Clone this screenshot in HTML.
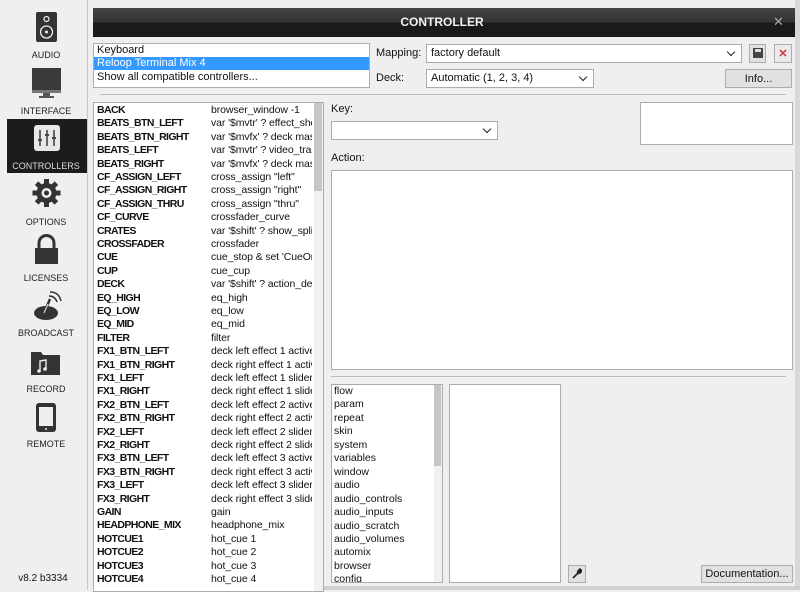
<!DOCTYPE html>
<html><head><style>
*{margin:0;padding:0;box-sizing:border-box}
body{width:800px;height:590px;overflow:hidden;background:#efefef;font-family:"Liberation Sans",sans-serif;font-size:11px;color:#111;position:relative}
.a{position:absolute}
.side{left:0;top:0;width:88px;height:590px;background:#efefef;border-right:1px solid #c8c8c8}
.lbl{position:absolute;width:86px;text-align:center;font-size:9px;color:#222;left:3px}
.box{position:absolute;background:#fff;border:1px solid #acacac}
.sel{position:absolute;background:#fff;border:1px solid #acacac;padding:2px 0 0 4px}
.sel:after{content:"";position:absolute;right:7px;top:4px;width:5px;height:5px;border-right:1.5px solid #222;border-bottom:1.5px solid #222;transform:rotate(45deg)}
.btn{position:absolute;background:#e1e1e1;border:1px solid #adadad;text-align:center;padding-top:3px}
.row{position:absolute;left:3px;height:13px;white-space:nowrap;font-size:10.5px}
.row b{position:absolute;left:0;letter-spacing:-0.6px}
.row span{position:absolute;left:114px;letter-spacing:-0.1px}
</style></head><body>
<div class="a side"></div>
<div class="a" style="left:7px;top:119px;width:80px;height:54px;background:#1c1c1c"></div>
<svg class="a" style="left:0;top:0" width="88" height="440">
<rect x="36" y="12" width="21" height="30" rx="2" fill="#333"/><circle cx="46.5" cy="19" r="2.5" fill="none" stroke="#eee" stroke-width="1.2"/><circle cx="46.5" cy="32" r="6" fill="none" stroke="#eee" stroke-width="1.3"/><circle cx="46.5" cy="32" r="1.5" fill="#eee"/>
<rect x="32" y="68" width="29" height="22" fill="#3a3a3a"/><rect x="32" y="90" width="29" height="3" fill="#777"/><rect x="43" y="93" width="7" height="3" fill="#555"/><rect x="39" y="96" width="15" height="2" fill="#555"/>
<rect x="34" y="125" width="26" height="26" rx="3" fill="#e8e8e8"/><g stroke="#444" stroke-width="1.6"><line x1="40" y1="130" x2="40" y2="146"/><line x1="47" y1="130" x2="47" y2="146"/><line x1="54" y1="130" x2="54" y2="146"/></g><g fill="#444"><rect x="38" y="139" width="4" height="2"/><rect x="45" y="134" width="4" height="2"/><rect x="52" y="137" width="4" height="2"/></g>
<g transform="translate(46.5,193)"><circle r="10" fill="#333"/><g fill="#333"><rect x="-2.5" y="-14" width="5" height="28"/><rect x="-2.5" y="-14" width="5" height="28" transform="rotate(45)"/><rect x="-2.5" y="-14" width="5" height="28" transform="rotate(90)"/><rect x="-2.5" y="-14" width="5" height="28" transform="rotate(135)"/></g><circle r="5" fill="#efefef"/><circle r="2.5" fill="#333"/></g>
<path d="M39 249v-6a7.5 7.5 0 0 1 15 0v6" fill="none" stroke="#333" stroke-width="3"/><rect x="35" y="248" width="23" height="16" fill="#333"/>
<ellipse cx="46" cy="313" rx="12" ry="7" fill="#333"/><line x1="44" y1="313" x2="50" y2="299" stroke="#333" stroke-width="2.5"/><line x1="44" y1="313" x2="48" y2="304" stroke="#eee" stroke-width="1"/><path d="M49 296q6 0 8 6M50 292q9 0 11 9" fill="none" stroke="#333" stroke-width="1.5"/>
<path d="M31 352h10l2 3h17v20h-29z" fill="#333"/><path d="M40 371v-10l6-1v9" fill="none" stroke="#eee" stroke-width="1.4"/><circle cx="39" cy="371" r="1.8" fill="#eee"/><circle cx="45" cy="369" r="1.8" fill="#eee"/>
<rect x="36" y="403" width="20" height="29" rx="3" fill="#333"/><rect x="39" y="407" width="14" height="19" fill="#efefef"/><circle cx="46" cy="429" r="1" fill="#eee"/>
</svg>
<div class="lbl" style="top:50px">AUDIO</div>
<div class="lbl" style="top:106px">INTERFACE</div>
<div class="lbl" style="top:161px;color:#ddd">CONTROLLERS</div>
<div class="lbl" style="top:217px">OPTIONS</div>
<div class="lbl" style="top:273px">LICENSES</div>
<div class="lbl" style="top:328px">BROADCAST</div>
<div class="lbl" style="top:384px">RECORD</div>
<div class="lbl" style="top:439px">REMOTE</div>
<div class="a" style="left:0;top:573px;width:86px;text-align:center;font-size:10px">v8.2 b3334</div>

<div class="a" style="left:93px;top:8px;width:702px;height:29px;background:linear-gradient(#444,#333 50%,#1a1a1a 50%,#1a1a1a);color:#f2f2f2;font-weight:bold;font-size:12px;text-align:center;line-height:29px;padding-right:4px">CONTROLLER</div>
<div class="a" style="left:773px;top:14px;color:#aaa;font-size:13px">✕</div>
<div class="a" style="left:795px;top:0;width:5px;height:590px;background:#d8d8d8"></div>
<div class="a" style="left:93px;top:586px;width:707px;height:4px;background:#d0d0d0"></div>

<div class="box" style="left:93px;top:43px;width:277px;height:45px"></div>
<div class="a" style="left:94px;top:57px;width:275px;height:13px;background:#3399ff"></div>
<div class="a" style="left:97px;top:44px">Keyboard</div>
<div class="a" style="left:97px;top:57px;color:#fff">Reloop Terminal Mix 4</div>
<div class="a" style="left:97px;top:71px">Show all compatible controllers...</div>

<div class="a" style="left:376px;top:47px">Mapping:</div>
<div class="sel" style="left:426px;top:44px;width:316px;height:19px">factory default</div>
<div class="btn" style="left:749px;top:44px;width:17px;height:19px"><svg width="10" height="10"><rect width="10" height="10" fill="#444"/><rect x="2" y="1" width="6" height="3" fill="#ddd"/></svg></div>
<div class="btn" style="left:774px;top:44px;width:18px;height:19px;background:#ede8f0;color:#c33;font-weight:bold;font-size:11px;padding-top:2px">✕</div>
<div class="a" style="left:376px;top:72px">Deck:</div>
<div class="sel" style="left:426px;top:69px;width:168px;height:19px">Automatic (1, 2, 3, 4)</div>
<div class="btn" style="left:725px;top:69px;width:67px;height:19px">Info...</div>
<div class="a" style="left:100px;top:94px;width:686px;height:1px;background:#bbb"></div>

<div class="box" style="left:93px;top:102px;width:231px;height:490px;overflow:hidden">
<div class="a" style="left:220px;top:0;width:9px;height:490px;background:#f0f0f0"></div>
<div class="a" style="left:220px;top:0;width:8px;height:88px;background:#c6c6c6"></div>
<div style="position:absolute;left:0;top:0;width:218px;height:490px;overflow:hidden">
<div class="row" style="top:1px"><b>BACK</b><span>browser_window -1</span></div>
<div class="row" style="top:14px"><b>BEATS_BTN_LEFT</b><span>var '$mvtr' ? effect_show</span></div>
<div class="row" style="top:28px"><b>BEATS_BTN_RIGHT</b><span>var '$mvfx' ? deck master</span></div>
<div class="row" style="top:41px"><b>BEATS_LEFT</b><span>var '$mvtr' ? video_trans</span></div>
<div class="row" style="top:55px"><b>BEATS_RIGHT</b><span>var '$mvfx' ? deck master</span></div>
<div class="row" style="top:68px"><b>CF_ASSIGN_LEFT</b><span>cross_assign "left"</span></div>
<div class="row" style="top:81px"><b>CF_ASSIGN_RIGHT</b><span>cross_assign "right"</span></div>
<div class="row" style="top:95px"><b>CF_ASSIGN_THRU</b><span>cross_assign "thru"</span></div>
<div class="row" style="top:108px"><b>CF_CURVE</b><span>crossfader_curve</span></div>
<div class="row" style="top:122px"><b>CRATES</b><span>var '$shift' ? show_split</span></div>
<div class="row" style="top:135px"><b>CROSSFADER</b><span>crossfader</span></div>
<div class="row" style="top:148px"><b>CUE</b><span>cue_stop &amp; set 'CueOn'</span></div>
<div class="row" style="top:162px"><b>CUP</b><span>cue_cup</span></div>
<div class="row" style="top:175px"><b>DECK</b><span>var '$shift' ? action_deck</span></div>
<div class="row" style="top:189px"><b>EQ_HIGH</b><span>eq_high</span></div>
<div class="row" style="top:202px"><b>EQ_LOW</b><span>eq_low</span></div>
<div class="row" style="top:215px"><b>EQ_MID</b><span>eq_mid</span></div>
<div class="row" style="top:229px"><b>FILTER</b><span>filter</span></div>
<div class="row" style="top:242px"><b>FX1_BTN_LEFT</b><span>deck left effect 1 active</span></div>
<div class="row" style="top:256px"><b>FX1_BTN_RIGHT</b><span>deck right effect 1 active</span></div>
<div class="row" style="top:269px"><b>FX1_LEFT</b><span>deck left effect 1 slider</span></div>
<div class="row" style="top:282px"><b>FX1_RIGHT</b><span>deck right effect 1 slider</span></div>
<div class="row" style="top:296px"><b>FX2_BTN_LEFT</b><span>deck left effect 2 active</span></div>
<div class="row" style="top:309px"><b>FX2_BTN_RIGHT</b><span>deck right effect 2 active</span></div>
<div class="row" style="top:323px"><b>FX2_LEFT</b><span>deck left effect 2 slider</span></div>
<div class="row" style="top:336px"><b>FX2_RIGHT</b><span>deck right effect 2 slider</span></div>
<div class="row" style="top:349px"><b>FX3_BTN_LEFT</b><span>deck left effect 3 active</span></div>
<div class="row" style="top:363px"><b>FX3_BTN_RIGHT</b><span>deck right effect 3 active</span></div>
<div class="row" style="top:376px"><b>FX3_LEFT</b><span>deck left effect 3 slider</span></div>
<div class="row" style="top:390px"><b>FX3_RIGHT</b><span>deck right effect 3 slider</span></div>
<div class="row" style="top:403px"><b>GAIN</b><span>gain</span></div>
<div class="row" style="top:416px"><b>HEADPHONE_MIX</b><span>headphone_mix</span></div>
<div class="row" style="top:430px"><b>HOTCUE1</b><span>hot_cue 1</span></div>
<div class="row" style="top:443px"><b>HOTCUE2</b><span>hot_cue 2</span></div>
<div class="row" style="top:457px"><b>HOTCUE3</b><span>hot_cue 3</span></div>
<div class="row" style="top:470px"><b>HOTCUE4</b><span>hot_cue 4</span></div>
</div></div>

<div class="a" style="left:331px;top:103px">Key:</div>
<div class="sel" style="left:331px;top:121px;width:167px;height:19px"></div>
<div class="box" style="left:640px;top:102px;width:153px;height:43px"></div>
<div class="a" style="left:331px;top:152px">Action:</div>
<div class="box" style="left:331px;top:170px;width:462px;height:200px"></div>
<div class="a" style="left:331px;top:376px;width:455px;height:1px;background:#bbb"></div>

<div class="box" style="left:331px;top:384px;width:112px;height:199px;overflow:hidden">
<div class="a" style="left:102px;top:0;width:8px;height:199px;background:#f0f0f0"></div>
<div class="a" style="left:102px;top:0;width:7px;height:81px;background:#c6c6c6"></div>
<div style="position:absolute;left:2px;top:0;line-height:13.45px;font-size:10.5px">flow<br>param<br>repeat<br>skin<br>system<br>variables<br>window<br>audio<br>audio_controls<br>audio_inputs<br>audio_scratch<br>audio_volumes<br>automix<br>browser<br>config</div>
</div>
<div class="box" style="left:449px;top:384px;width:112px;height:199px"></div>
<div class="btn" style="left:568px;top:565px;width:18px;height:18px;padding-top:2px"><svg width="10" height="11"><path d="M1 10l5-5M5 4l2 2M6 3l2-2 2 2-2 2z" stroke="#222" stroke-width="1.6" fill="#222"/></svg></div>
<div class="btn" style="left:701px;top:565px;width:92px;height:18px;padding-top:2px">Documentation...</div>
</body></html>
